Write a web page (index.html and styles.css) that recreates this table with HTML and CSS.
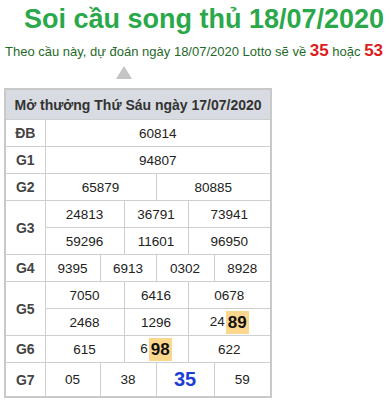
FILE: index.html
```html
<!DOCTYPE html>
<html lang="vi">
<head>
<meta charset="utf-8">
<link rel="stylesheet" href="styles.css">
</head>
<body>
<div class="page">
  <h1 class="title">Soi cầu song thủ 18/07/2020</h1>
  <p class="sub">Theo cầu này, dự đoán ngày 18/07/2020 Lotto sẽ về <b class="red">35</b> hoặc <b class="red">53</b></p>
  <div class="arrow-row"><span class="arrow"></span></div>
  <table class="kq">
    <colgroup>
      <col class="c0"><col class="c1"><col class="c2"><col class="c3"><col class="c4"><col class="c5"><col class="c6">
    </colgroup>
    <thead>
      <tr><th colspan="7" class="head">Mở thưởng Thứ Sáu ngày 17/07/2020</th></tr>
    </thead>
    <tbody>
      <tr class="r"><td class="lb">ĐB</td><td colspan="6">60814</td></tr>
      <tr class="r"><td class="lb">G1</td><td colspan="6">94807</td></tr>
      <tr class="r"><td class="lb">G2</td><td colspan="3">65879</td><td colspan="3">80885</td></tr>
      <tr class="r"><td class="lb" rowspan="2">G3</td><td colspan="2">24813</td><td colspan="2">36791</td><td colspan="2">73941</td></tr>
      <tr class="r"><td colspan="2">59296</td><td colspan="2">11601</td><td colspan="2">96950</td></tr>
      <tr class="r"><td class="lb">G4</td><td>9395</td><td colspan="2">6913</td><td colspan="2">0302</td><td>8928</td></tr>
      <tr class="r"><td class="lb" rowspan="2">G5</td><td colspan="2">7050</td><td colspan="2">6416</td><td colspan="2">0678</td></tr>
      <tr class="r"><td colspan="2">2468</td><td colspan="2">1296</td><td colspan="2">24<span class="hl">89</span></td></tr>
      <tr class="r"><td class="lb">G6</td><td colspan="2">615</td><td colspan="2">6<span class="hl">98</span></td><td colspan="2">622</td></tr>
      <tr class="r7"><td class="lb">G7</td><td>05</td><td colspan="2">38</td><td colspan="2"><span class="blue">35</span></td><td>59</td></tr>
    </tbody>
  </table>
</div>
</body>
</html>
```

FILE: styles.css
```css
html, body {
  margin: 0;
  padding: 0;
  background: #fff;
}
body {
  font-family: "Liberation Sans", Arial, sans-serif;
  color: #222;
}
.page {
  width: 391px;
}
.title {
  margin: 0;
  padding-top: 3px;
  padding-left: 24px;
  font-size: 27px;
  line-height: 32px;
  font-weight: bold;
  color: #2aa84a;
  white-space: nowrap;
}
.sub {
  margin: 6px 0 0 0;
  padding-left: 5px;
  font-size: 13px;
  line-height: 20px;
  color: #1f6a2a;
  white-space: nowrap;
}
.red {
  color: #e01b1b;
  font-size: 17px;
}
.arrow-row {
  height: 13px;
  margin-top: 4px;
  padding-left: 116px;
}
.arrow {
  display: block;
  width: 0;
  height: 0;
  border-left: 8px solid transparent;
  border-right: 8px solid transparent;
  border-bottom: 13px solid #c4c4c4;
}
.kq {
  margin: 9px 0 0 4px;
  border-collapse: collapse;
  table-layout: fixed;
  width: 266px;
  border: 2px solid #c9c9c9;
  font-size: 13.5px;
}
.c0 { width: 40px; }
.c1 { width: 55px; }
.c2 { width: 24px; }
.c3 { width: 32px; }
.c4 { width: 32px; }
.c5 { width: 26px; }
.c6 { width: 57px; }
.kq th, .kq td {
  border: 1px solid #cfcfcf;
  text-align: center;
  padding: 0;
}
.head {
  height: 29px;
  background: #d8dbe1;
  color: #333;
  font-size: 14px;
  font-weight: bold;
}
.r td {
  height: 26px;
}
.r7 td {
  height: 33px;
}
.lb {
  font-weight: bold;
  color: #444;
  font-size: 14px;
}
.hl {
  display: inline-block;
  background: #fbd78d;
  font-weight: bold;
  font-size: 17px;
  line-height: 23px;
  padding: 0 2px;
  margin-left: 1px;
  color: #111;
  vertical-align: middle;
}
.blue {
  color: #1d3ed6;
  font-weight: bold;
  font-size: 20px;
}
```
